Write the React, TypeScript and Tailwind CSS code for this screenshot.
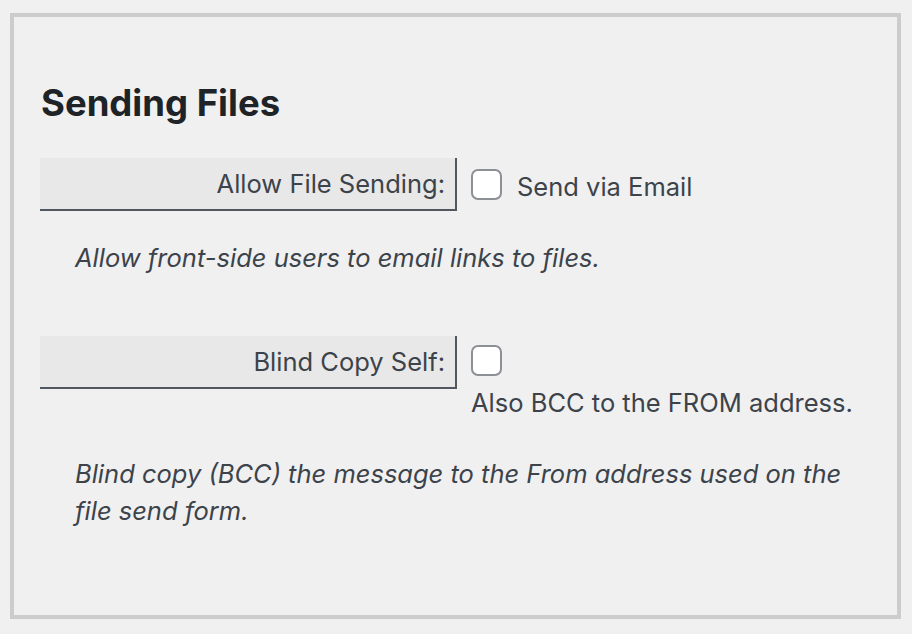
import React from "react";

const Checkbox = () => (
	<span className="block w-[31px] h-[31px] shrink-0 rounded-[7px] border-2 border-[#8c8f94] bg-white" />
);

const FieldLabel = ({ text }: { text: string }) => (
	<div className="w-[417px] h-[53px] shrink-0 flex items-center justify-end pr-[10px] pt-[2px] bg-[#e8e8e8] border-r-2 border-b-2 border-[#50575e] text-[25.5px] text-[#3c434a]">
		{text}
	</div>
);

const App = () => {
	return (
		<div className="min-h-[634px] bg-[#f0f0f1] pt-[13px] pl-[10px] font-['Inter',sans-serif] text-[#3c434a]">
			<div className="w-[891px] h-[606px] border-4 border-[#cccccc] pl-[26px] pt-[64px]">
				<h2 className="text-[36.5px] leading-[44px] font-bold text-[#1d2327] ml-[1px]">Sending Files</h2>

				{/* Allow file sending */}
				<div className="flex items-start mt-[33px]">
					<FieldLabel text="Allow File Sending:" />
					<label className="flex items-center ml-[14px] mt-[9px]">
						<Checkbox />
						<span className="ml-[15px] mt-[4px] text-[25.5px] leading-[31px]">Send via Email</span>
					</label>
				</div>
				<p className="italic text-[25.5px] leading-[37px] ml-[35px] mt-[28px]">
					Allow front-side users to email links to files.
				</p>

				{/* Blind copy */}
				<div className="flex items-start mt-[60px]">
					<FieldLabel text="Blind Copy Self:" />
					<div className="flex flex-col ml-[14px] mt-[9px]">
						<Checkbox />
						<span className="text-[25.5px] leading-[37px] mt-[8px]">Also BCC to the FROM address.</span>
					</div>
				</div>
				<p className="italic text-[25.5px] leading-[37px] ml-[35px] mt-[34px] w-[790px]">
					Blind copy (BCC) the message to the From address used on the file send form.
				</p>
			</div>
		</div>
	);
};

export default App;
